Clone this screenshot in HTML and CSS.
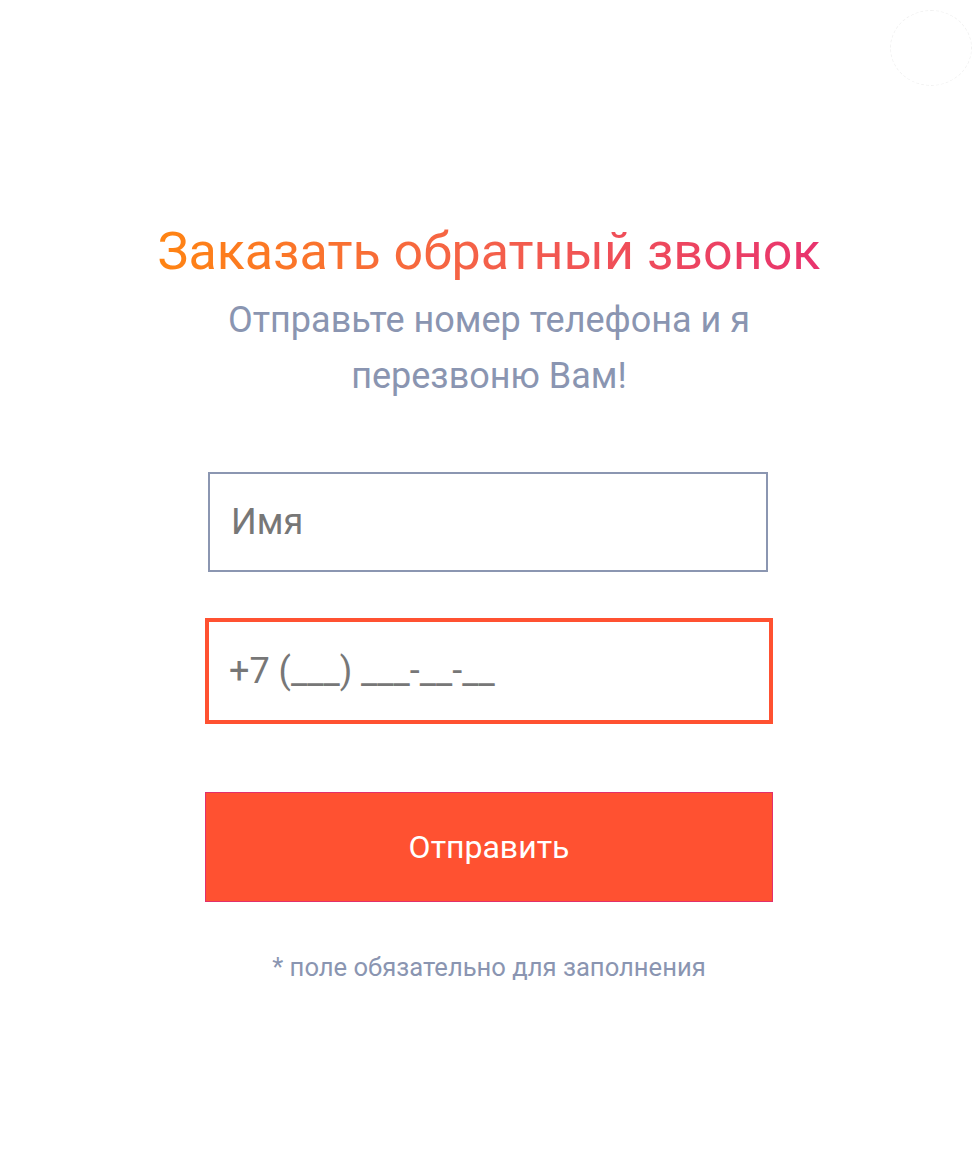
FILE: index.html
```html
<!DOCTYPE html>
<html lang="ru">
<head>
<meta charset="utf-8">
<link rel="stylesheet" href="styles.css">
</head>
<body>
<div class="page">
  <div class="deco-circle"></div>
  <form class="callback">
    <h1 class="title">Заказать обратный звонок</h1>
    <p class="subtitle">Отправьте номер телефона и я перезвоню Вам!</p>
    <div class="field field-name"><span class="ph">Имя</span></div>
    <div class="field field-phone"><span class="ph">+7 (___) ___-__-__</span></div>
    <div class="btn">Отправить</div>
    <p class="note">* поле обязательно для заполнения</p>
  </form>
</div>
</body>
</html>
```
FILE: styles.css
```css
html, body { margin: 0; padding: 0; background: #fff; }
body { font-family: Roboto, "Noto Sans", sans-serif; }
.page { position: relative; width: 978px; height: 1152px; overflow: hidden; }
.deco-circle {
  position: absolute; left: 890px; top: 10px; width: 80px; height: 74px;
  border-radius: 50%; border: 1px dashed #f1f1f1;
}
.callback {
  display: flex; flex-direction: column; align-items: center;
  padding-top: 222px;
}
.title {
  margin: 0; font-weight: 400; font-size: 52px; line-height: 60px;
  background: linear-gradient(90deg, #ff8412 0%, #f4604a 50%, #e8336e 100%);
  -webkit-background-clip: text; background-clip: text; color: transparent;
}
.subtitle {
  margin: 0; width: 560px; text-align: center; color: #8a95b1;
  font-size: 36px; line-height: 56px; padding-top: 10px;
}
.field {
  box-sizing: border-box; display: flex; align-items: center;
  font-size: 36px; color: #777777;
}
.field-name {
  margin-top: 68px; margin-right: 2px; width: 560px; height: 100px;
  border: 2px solid #8b96b1; padding-left: 21px;
}
.field-phone {
  margin-top: 46px; width: 568px; height: 106px;
  border: 4px solid #ff5131; padding-left: 20px;
}
.btn {
  box-sizing: border-box; margin-top: 68px; width: 568px; height: 110px;
  background: #ff5131; border: 1px solid #e2306c; color: #fff;
  display: flex; align-items: center; justify-content: center;
  font-size: 32px;
}
.note {
  margin: 50px 0 0; color: #8a95b1; font-size: 25.6px; line-height: 30px;
}
```
